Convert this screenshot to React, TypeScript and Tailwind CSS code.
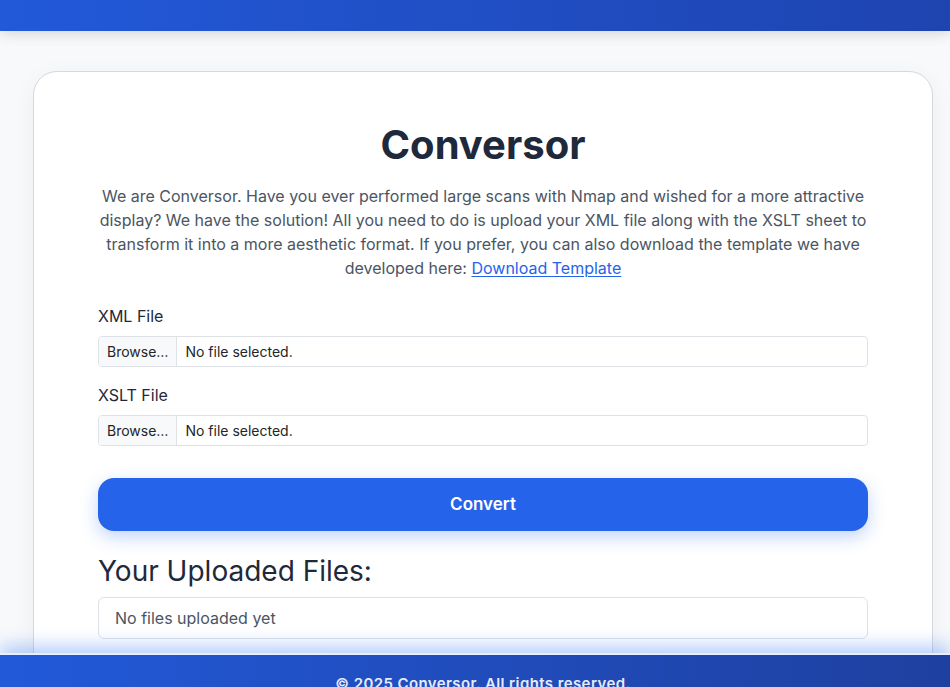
import React from 'react';

const FONT = { fontFamily: 'Inter, "Noto Sans", "Liberation Sans", sans-serif' };

function FileField({ label, last }: { label: string; last?: boolean }) {
  return (
    <div className={last ? '' : 'mb-4'}>
      <label className="block mb-2 text-[16px] leading-6 text-[#1f2937]">{label}</label>
      <div className="flex h-[31px] border border-[#dee2e6] rounded-[4px] overflow-hidden bg-white text-[14px] text-[#212529]">
        <span className="px-2 flex items-center bg-[#f8f9fa] border-r border-[#dee2e6]">Browse…</span>
        <span className="px-2 flex items-center">No file selected.</span>
      </div>
    </div>
  );
}

export default function App() {
  return (
    <div className="min-h-screen flex flex-col bg-[#f8f9fb]" style={FONT}>
      {/* header */}
      <header className="relative z-10 h-[31px] shrink-0 bg-gradient-to-r from-[#2259d9] to-[#1e44b0] shadow-[0_3px_14px_rgba(0,0,0,0.14)]" />

      {/* main */}
      <main className="h-[622px] shrink-0 overflow-hidden pt-[40px] pl-[33px]">
        <div className="w-[900px] bg-white border border-[#d6d8dd] rounded-[24px] shadow-[0_6px_24px_rgba(15,23,42,0.05)] px-16 pt-[49px] pb-16">
          <h1 className="text-center text-[40px] leading-[1.2] font-bold text-[#1e293b] mb-[15px]">Conversor</h1>
          <p className="text-center text-[16px] leading-6 text-[#4b5563] mb-6">
            We are Conversor. Have you ever performed large scans with Nmap and wished for a more attractive
            display? We have the solution! All you need to do is upload your XML file along with the XSLT sheet to
            transform it into a more aesthetic format. If you prefer, you can also download the template we have
            developed here:{' '}
            <a href="#" className="text-[#2563eb] underline decoration-1 underline-offset-2">Download Template</a>
          </p>

          <FileField label="XML File" />
          <FileField label="XSLT File" last />

          <button className="mt-8 w-full h-[53px] rounded-[16px] bg-[#2563eb] text-white text-[17px] font-semibold shadow-[0_6px_18px_rgba(37,99,235,0.28)]">
            Convert
          </button>

          <h2 className="mt-6 mb-2 text-[28px] leading-[1.2] font-normal text-[#1e293b]">Your Uploaded Files:</h2>
          <div className="h-[42px] flex items-center px-4 border border-[#dee2e6] rounded-[6px] text-[16px] text-[#4b5563]">
            No files uploaded yet
          </div>
        </div>
      </main>

      {/* footer */}
      <footer className="relative z-10 shrink-0 border-t-2 border-[#e8eeff] bg-gradient-to-r from-[#2259d9] to-[#1e40a0] shadow-[0_-8px_16px_rgba(59,130,246,0.35)] pt-[17px] pb-5 pl-4 text-center">
        <p className="text-[15px] leading-6 font-semibold tracking-[0.4px] text-[#e6ebfa]">© 2025 Conversor. All rights reserved.</p>
      </footer>
    </div>
  );
}
